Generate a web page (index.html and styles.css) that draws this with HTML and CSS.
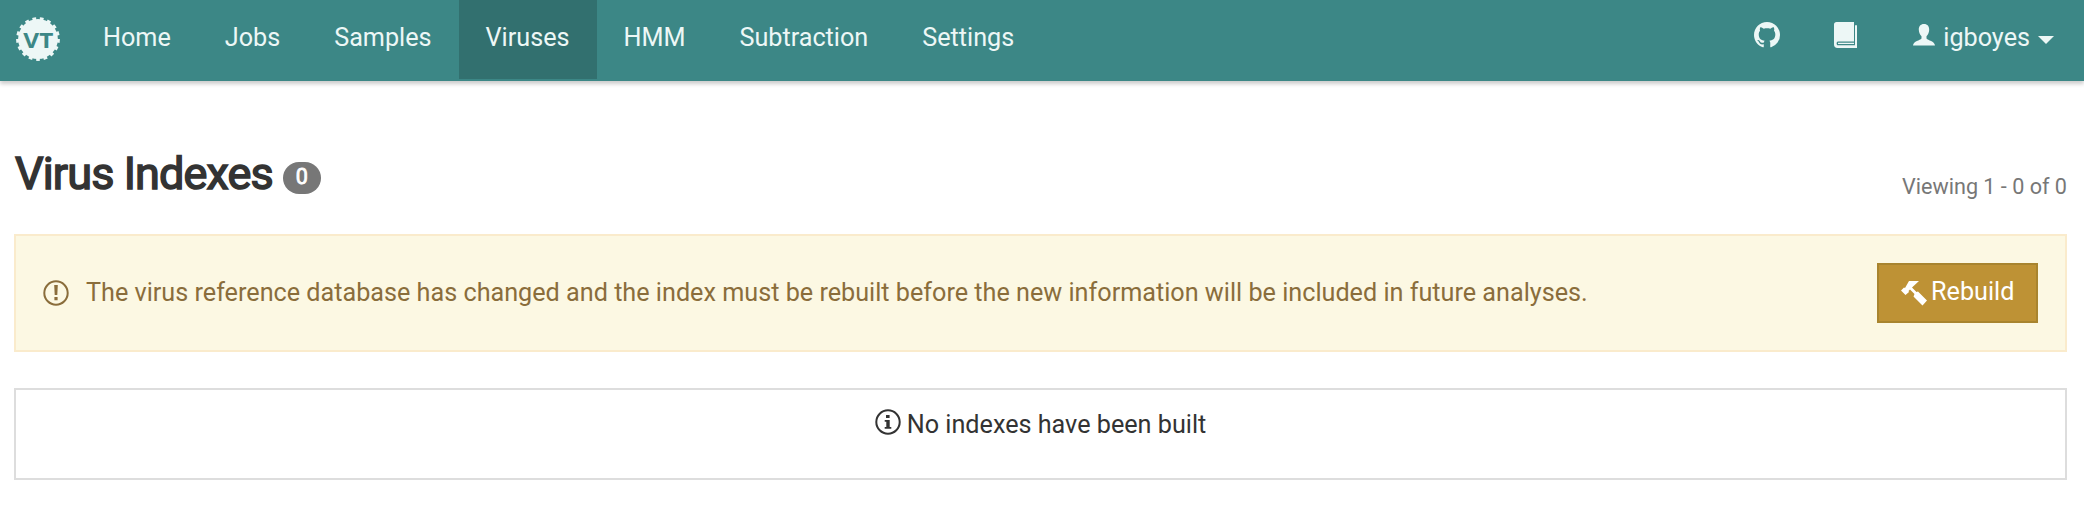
FILE: index.html
```html
<!DOCTYPE html>
<html lang="en">
<head>
<meta charset="utf-8">
<title>Virus Indexes</title>
<link rel="stylesheet" href="styles.css">
</head>
<body>
<nav class="navbar">
  <a class="brand">
    <svg class="logo" viewBox="0 0 44 44">
      <circle class="logo-disc" cx="22" cy="22" r="19.9"/>
      <circle class="logo-teeth" cx="22" cy="22" r="20.4" pathLength="136"/>
      <text class="logo-text" x="22.3" y="31" text-anchor="middle" textLength="30" lengthAdjust="spacingAndGlyphs">VT</text>
    </svg>
  </a>
  <a class="link">Home</a>
  <a class="link">Jobs</a>
  <a class="link">Samples</a>
  <a class="link active">Viruses</a>
  <a class="link">HMM</a>
  <a class="link">Subtraction</a>
  <a class="link">Settings</a>
  <div class="nav-right">
    <a class="nav-icon"><svg class="github" viewBox="0 0 16 16"><path d="M8 0C3.58 0 0 3.58 0 8c0 3.54 2.29 6.53 5.47 7.59.4.07.55-.17.55-.38 0-.19-.01-.82-.01-1.49-2.01.37-2.53-.49-2.69-.94-.09-.23-.48-.94-.82-1.13-.28-.15-.68-.52-.01-.53.63-.01 1.08.58 1.23.82.72 1.21 1.87.87 2.33.66.07-.52.28-.87.51-1.07-1.78-.2-3.64-.89-3.64-3.95 0-.87.31-1.59.82-2.15-.08-.2-.36-1.02.08-2.12 0 0 .67-.21 2.2.82.64-.18 1.32-.27 2-.27s1.36.09 2 .27c1.53-1.04 2.2-.82 2.2-.82.44 1.1.16 1.92.08 2.12.51.56.82 1.27.82 2.15 0 3.07-1.87 3.75-3.65 3.95.29.25.54.73.54 1.48 0 1.07-.01 1.93-.01 2.2 0 .21.15.46.55.38A8.01 8.01 0 0 0 16 8c0-4.42-3.58-8-8-8z"/></svg></a>
    <a class="nav-icon"><svg class="book" viewBox="0 0 23 26"><path fill-rule="evenodd" d="M2.500 0H20V19.500H4C2.200 19.500 2.200 23.300 4 23.300H21V3.200H23V26H3.500C1.200 26 0 24.600 0 22.500V2.500C0 1 1 0 2.500 0ZM4 20.800H20V22H4Z"/></svg></a>
    <a class="user"><svg class="person" viewBox="0 0 22 22"><path d="M11 0C14.500 0 16.300 2.300 16.200 5.800C16.100 8.600 15 10.800 13.500 12.200V14.500C15 16.500 21.500 17 22 21.500H0C.5 17 7 16.500 8.500 14.500V12.200C7 10.800 5.900 8.600 5.800 5.800C5.700 2.300 7.500 0 11 0Z"/></svg><span>igboyes</span><i class="caret"></i></a>
  </div>
</nav>
<main class="page">
  <header class="heading">
    <h1 class="title">Virus Indexes</h1>
    <span class="badge">0</span>
    <span class="viewing">Viewing 1 - 0 of 0</span>
  </header>
  <section class="alert">
    <svg class="round-icon" viewBox="0 0 26 26"><circle cx="13" cy="13" r="11.700"/><path d="M11.200 5H14.800L14.300 15H11.700ZM11.400 17H14.600V20.200H11.400Z"/></svg>
    <span class="alert-text">The virus reference database has changed and the index must be rebuilt before the new information will be included in future analyses.</span>
    <button class="rebuild"><svg class="hammer" viewBox="0 0 26 25"><path d="M8 0H18L11 6.500L15.500 11L17 10.500L26 19.500L21.500 24.500L12.500 15.500L13.500 13L9 8.500L7.500 10L8 11L4.500 14L0 9.500L3 6.500L4 7Z"/></svg><span>Rebuild</span></button>
  </section>
  <section class="empty">
    <svg class="round-icon" viewBox="0 0 26 26"><circle cx="13" cy="13" r="11.700"/><path d="M11 6H14.600V9H11ZM9.700 11H14.700V18H16.300V19.800H9.700V18H11.300V12.800H9.700Z"/></svg>
    <span>No indexes have been built</span>
  </section>
</main>
</body>
</html>
```
FILE: styles.css
```css
body {
  margin: 0;
  background: #fff;
  color: #333;
  font: 25.2px/36px Roboto, sans-serif;
}
.navbar {
  display: flex;
  align-items: flex-start;
  box-sizing: border-box;
  height: 81px;
  background: #3c8786;
  color: #edf7f6;
  box-shadow: 0 3px 4px rgba(0, 0, 0, .2);
}
.brand { width: 60px; padding: 17px 0 0 16px; box-sizing: border-box; margin-right: 16px; }
.logo { display: block; width: 44px; height: 44px; }
.logo-disc { fill: #edf7f6; }
.logo-teeth { fill: none; stroke: #edf7f6; stroke-width: 3; stroke-dasharray: 4 4; }
.logo-text { font: 700 21px "Open Sans", sans-serif; fill: #3c8786; }
.link { height: 79px; padding: 20px 27px 0; box-sizing: border-box; }
.active { background: #32706f; }
.nav-right { display: flex; margin-left: auto; padding-right: 30px; }
.nav-icon { padding: 22px 27px 0; }
.navbar svg { display: block; }
.github, .book, .person, .hammer { fill: currentColor; }
.github { width: 26px; height: 26px; }
.book { width: 23px; height: 26px; }
.user { display: flex; padding: 20px 0 0 29px; }
.person { width: 22px; height: 22px; margin: 4px 8px 0 0; }
.caret { margin: 16px 0 0 8px; width: 0; height: 0; border: 8px solid transparent; border-top: 8px solid; border-bottom: 0; }
.page { padding: 0 17px 0 14px; }
.heading { display: flex; height: 153px; box-sizing: border-box; padding: 66px 0 0 1px; }
.title { margin: 0; font-size: 45px; line-height: 54px; font-weight: 400; letter-spacing: -.88px; -webkit-text-stroke: 1.500px #333; }
.badge { width: 38px; height: 32px; margin: 15px 0 0 10px; border-radius: 18px; background: #777; color: #fff; font-size: 21.600px; line-height: 30px; text-align: center; -webkit-text-stroke: .8px #fff; }
.viewing { margin: 22px 0 0 auto; color: #777; font-size: 21.600px; }
.alert { display: flex; align-items: center; height: 118px; box-sizing: border-box; padding: 0 27px; border: 2px solid #faebcc; background: #fcf8e3; color: #8a6d3b; }
.round-icon { width: 26px; height: 26px; fill: currentColor; }
.round-icon circle { fill: none; stroke: currentColor; stroke-width: 2; }
.alert-text { margin-left: 17px; }
.rebuild { display: flex; align-items: flex-start; width: 161px; height: 60px; margin-left: auto; padding: 9px 0 0 22px; border: 2px solid #a8842f; background: #be9235; color: #fff; font: inherit; }
.hammer { width: 26px; height: 25px; margin: 7px 4px 0 0; }
.empty { display: flex; justify-content: center; box-sizing: border-box; height: 92px; margin-top: 36px; padding-top: 17px; border: 2px solid #ddd; gap: 6px; }
.empty .round-icon { margin-top: 2px; }
```
